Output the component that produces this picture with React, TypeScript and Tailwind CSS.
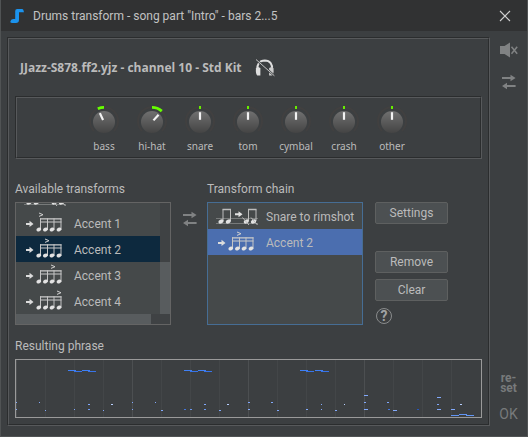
import React from "react";

const ETCH_OUTER = "border border-t-[#2b2d2e] border-l-[#2b2d2e] border-r-[#57595b] border-b-[#57595b]";
const ETCH_INNER = "border border-t-[#57595b] border-l-[#57595b] border-r-[#2b2d2e] border-b-[#2b2d2e]";

function Etched({ className, children }: { className: string; children: React.ReactNode }) {
  return (
    <div className={`${ETCH_OUTER} flex flex-col`}>
      <div className={`${ETCH_INNER} ${className} grow`}>{children}</div>
    </div>
  );
}

function NoteIcon() {
  return (
    <svg width="16" height="18" viewBox="0 0 16 18" aria-hidden="true">
      <path d="M6.2 4 Q6.2 2 8.2 2 H13.4 Q14.4 2 15 5.2 H10 V12.8 Q10 16 6.8 16 H3 Q0.8 16 1.4 14.2 Q2.2 12 4.4 12 H6.2 Z" fill="#1b93ee" />
    </svg>
  );
}

function SwapIcon() {
  return (
    <svg width="14" height="16" viewBox="0 0 14 16" aria-hidden="true" fill="#808283">
      <path d="M0 3 H8.5 V0.8 L13.6 4 L8.5 7.2 V5 H0 Z" />
      <path d="M13.6 11 H5 V8.8 L0 12 L5 15.2 V13 H13.6 Z" />
    </svg>
  );
}

function MuteIcon() {
  return (
    <svg width="18" height="16" viewBox="0 0 18 16" aria-hidden="true">
      <path d="M0 4 H4.5 L10 0.5 V15.5 L4.5 12 H0 Z" fill="#808283" />
      <path d="M11.5 4.8 L17.2 11.8 M17.2 4.8 L11.5 11.8" stroke="#808283" strokeWidth="1.5" />
    </svg>
  );
}

function HeadphonesOffIcon() {
  return (
    <svg width="22" height="20" viewBox="0 0 22 20" aria-hidden="true">
      <path d="M3.4 12 Q2.6 2.8 10.8 2.6 Q18.9 2.8 18.1 12" fill="none" stroke="#dedede" strokeWidth="2" />
      <path d="M2 10.5 L3.4 8.8 L6.4 10 V17.4 H3.2 Q1.4 15.5 2 10.5 Z" fill="#dedede" />
      <path d="M19.5 10.5 L18.1 8.8 L15.1 10 V17.4 H18.3 Q20.1 15.5 19.5 10.5 Z" fill="#cccccc" />
      <path d="M2 1.5 L20.4 17.8" stroke="#3c3f41" strokeWidth="2" />
      <path d="M2 1.5 L20.4 17.8" stroke="#c4c4c4" strokeWidth="1" />
    </svg>
  );
}

function Knob({ label, angle }: { label: string; angle: number }) {
  const rad = (angle * Math.PI) / 180;
  const point = (radius: number) => `${16 + radius * Math.sin(rad)} ${16 - radius * Math.cos(rad)}`;
  return (
    <div className="flex w-12 flex-col items-center" role="slider" aria-label={label} aria-valuenow={angle}>
      <svg width="32" height="32" viewBox="0 0 32 32" aria-hidden="true">
        <defs>
          <linearGradient id={`face-${label}`} x1="0" y1="0" x2="0" y2="1">
            <stop offset="0" stopColor="#707070" />
            <stop offset="1" stopColor="#444444" />
          </linearGradient>
        </defs>
        <path d="M6 25 A14 14 0 1 1 26 25" fill="none" stroke="#414040" strokeWidth="2" />
        <circle cx="16" cy="16" r="11" fill={`url(#face-${label})`} />
        {angle === 0 ? (
          <path d="M16 0 V3" stroke="#66ee00" strokeWidth="2" />
        ) : (
          <path
            d={angle < 0 ? `M${point(14.6)} A14.6 14.6 0 0 1 16 1.4` : `M16 1.4 A14.6 14.6 0 0 1 ${point(14.6)}`}
            fill="none"
            stroke="#66ff00"
            strokeWidth="2.8"
          />
        )}
        <path d={`M${point(9.8)} L${point(2.2)}`} stroke="#f2f2f2" strokeWidth="2.2" />
      </svg>
      <span className="font-['Noto_Sans',sans-serif] text-[10px] leading-4">{label}</span>
    </div>
  );
}

function AccentIcon({ beat }: { beat: number }) {
  const x = 17 + 6 * beat;
  return (
    <svg className="shrink-0" width="42" height="26" viewBox="0 0 42 26" aria-hidden="true">
      <path d="M2 13 H5.5 V10.8 L9.5 14 L5.5 17 V14.9 H2 Z" fill="#dcdcdc" />
      <path d={`M${x - 2} 3 L${x + 2} 4.7 L${x - 2} 6.4`} fill="none" stroke="#d0d0d0" />
      <path d="M16 8.8 H37.5 M16 12 H37.5" stroke="#cccccc" strokeWidth="1.2" />
      <path d="M16.5 8.3 V20 M23.5 8.3 V20 M30 8.3 V20 M37 8.3 V20" stroke="#c4c4c4" />
      {[14.8, 21.4, 28, 35].map((cx) => (
        <ellipse key={cx} cx={cx} cy="19.5" rx="2.5" ry="1.8" fill="#e2e2e2" transform={`rotate(-25 ${cx} 19.5)`} />
      ))}
    </svg>
  );
}

function RimshotIcon() {
  return (
    <svg className="shrink-0" width="42" height="26" viewBox="0 0 42 26" aria-hidden="true">
      <path d="M0 15.5 H42 M0 20.5 H42" stroke="#777a7a" />
      <path d="M7 18 V6.5 H14.5 V18 M32.5 18 V6.5 H40 V18" fill="none" stroke="#bdbdbd" />
      <path d="M6.5 6.5 H15 M32 6.5 H40.5" stroke="#bdbdbd" strokeWidth="1.6" />
      {[5, 12.3, 30.3, 37.5].map((cx) => (
        <ellipse key={cx} cx={cx} cy="18.5" rx="2.7" ry="2" fill="#e2e2e2" transform={`rotate(-25 ${cx} 18.5)`} />
      ))}
      <path d="M26.5 14.5 L33 22 M35 14.5 L41.5 22" stroke="#bdbdbd" />
      <path d="M19 10.3 H22.5 V8.2 L26.5 11.2 L22.5 14.2 V12.2 H19 Z" fill="#e2e2e2" />
    </svg>
  );
}

function ListRow({ icon, label, className }: { icon: React.ReactNode; label: string; className: string }) {
  return (
    <li role="option" aria-selected={label === "Accent 2"} className={`flex h-[26px] shrink-0 items-center gap-2 pl-2 whitespace-nowrap ${className}`}>
      {icon}
      <span className="pt-px">{label}</span>
    </li>
  );
}

function DialogButton({ children }: { children: string }) {
  return (
    <button className="h-[22px] rounded-[2px] border border-[#5e6060] bg-[#4c5052] leading-5">{children}</button>
  );
}

// Each note: x, y, length, colour, in pixels of the phrase view.
const NOTES: [number, number, number, string][] = [
  [52, 11, 8, "#3f80f5"], [58, 12, 8, "#3874e8"], [66, 11, 8, "#3f80f5"], [72, 12, 8, "#3874e8"],
  [168, 11, 8, "#3f80f5"], [174, 12, 8, "#3874e8"], [182, 11, 8, "#3f80f5"], [188, 12, 8, "#3874e8"],
  [284, 11, 8, "#3f80f5"], [290, 12, 8, "#3874e8"], [299, 11, 8, "#3f80f5"], [305, 12, 8, "#3874e8"],
  [0, 43, 1, "#82a9fa"], [0, 50, 1, "#82a9fa"], [23, 43, 1, "#82a9fa"], [29, 51, 1, "#82a9fa"],
  [58, 50, 1, "#82a9fa"], [72, 45, 2, "#82a9fa"], [72, 50, 2, "#6b98f0"], [87, 51, 1, "#82a9fa"],
  [95, 45, 2, "#b8d0ff"], [116, 43, 1, "#82a9fa"], [116, 50, 1, "#82a9fa"], [139, 43, 1, "#82a9fa"],
  [145, 51, 2, "#82a9fa"], [168, 50, 2, "#4477dd"], [174, 50, 2, "#6b98f0"], [188, 45, 2, "#82a9fa"],
  [188, 50, 2, "#6b98f0"], [203, 51, 2, "#82a9fa"], [211, 45, 2, "#b8d0ff"], [232, 43, 2, "#82a9fa"],
  [232, 50, 2, "#82a9fa"], [255, 43, 2, "#82a9fa"], [261, 51, 2, "#82a9fa"], [290, 50, 2, "#82a9fa"],
  [305, 45, 1, "#82a9fa"], [305, 50, 1, "#82a9fa"], [319, 51, 2, "#82a9fa"], [328, 45, 1, "#b8d0ff"],
  [348, 36, 4, "#82a9fa"], [348, 43, 2, "#82a9fa"], [348, 50, 4, "#82a9fa"], [371, 43, 2, "#82a9fa"],
  [372, 50, 2, "#4477dd"], [377, 51, 4, "#82a9fa"], [401, 50, 2, "#2857bd"], [421, 38, 4, "#82a9fa"],
  [421, 45, 2, "#82a9fa"], [421, 50, 4, "#82a9fa"], [435, 50, 4, "#82a9fa"], [444, 45, 2, "#b8d0ff"],
  [435, 56, 8, "#6195f5"], [443, 55, 8, "#6195f5"], [450, 56, 8, "#6195f5"],
];

function PhraseView() {
  return (
    <svg className="block h-[57px] w-full" viewBox="0 0 465 57" preserveAspectRatio="none" shapeRendering="crispEdges" role="img" aria-label="Resulting phrase">
      {Array.from({ length: 16 }, (_, i) => (
        <rect key={i} x={i * 29} y="0" width="1" height="57" fill={i % 4 === 0 ? "#4c4f51" : "#434648"} />
      ))}
      {NOTES.map(([x, y, w, fill], i) => (
        <rect key={i} x={x} y={y - 1} width={w} height="1" fill={fill} />
      ))}
    </svg>
  );
}

export default function App() {
  return (
    <div className="border-x border-b border-[#505354] bg-[#3c3f41] font-['Roboto','Open_Sans',sans-serif] text-[12px] leading-4 text-[#bbbbbb]">
      <header className="flex h-[31px] items-center bg-[#313233] pr-4 pl-2">
        <NoteIcon />
        <h1 className="ml-2 grow text-[#c2c2c2]">Drums transform - song part "Intro" - bars 2...5</h1>
        <button aria-label="Close">
          <svg width="12" height="12" viewBox="0 0 12 12" aria-hidden="true">
            <path d="M1 1 L11 11 M11 1 L1 11" stroke="#d0d0d0" strokeWidth="1.1" />
          </svg>
        </button>
      </header>

      <div className="flex pt-[6px] pb-[10px] pl-[6px]">
        <main className="min-w-0 grow">
          <Etched className="px-[6px] pb-[6px]">
            <div className="flex h-[57px] items-center gap-3 pl-[5px]">
              <h2 className="font-['Open_Sans',sans-serif] font-bold">JJazz-S878.ff2.yjz - channel 10 - Std Kit</h2>
              <button aria-label="Solo off">
                <HeadphonesOffIcon />
              </button>
            </div>

            <Etched className="flex h-[61px] justify-center pt-2 pr-px">
              <Knob label="bass" angle={-25} />
              <Knob label="hi-hat" angle={42} />
              <Knob label="snare" angle={0} />
              <Knob label="tom" angle={0} />
              <Knob label="cymbal" angle={0} />
              <Knob label="crash" angle={0} />
              <Knob label="other" angle={0} />
            </Etched>

            <div className="mt-[22px] flex">
              <section className="w-[156px]">
                <h3 id="available">Available transforms</h3>
                <div className="mt-[5px] grid h-[123px] grid-cols-[1fr_10px] grid-rows-[1fr_10px] border border-[#646464] bg-[#45494a]">
                  <ul role="listbox" aria-labelledby="available" className="flex min-h-0 flex-col justify-end overflow-hidden">
                    <ListRow icon={<RimshotIcon />} label="" className="" />
                    <ListRow icon={<AccentIcon beat={0} />} label="Accent 1" className="" />
                    <ListRow icon={<AccentIcon beat={1} />} label="Accent 2" className="bg-[#0d293e]" />
                    <ListRow icon={<AccentIcon beat={2} />} label="Accent 3" className="" />
                    <ListRow icon={<AccentIcon beat={3} />} label="Accent 4" className="" />
                  </ul>
                  <div className="flex flex-col justify-end bg-[#3f4244]">
                    <div className="h-[52px] bg-[#585c5e]" />
                  </div>
                  <div className="col-span-2 bg-[#3f4244]">
                    <div className="h-full w-[135px] bg-[#585c5e]" />
                  </div>
                </div>
              </section>

              <button aria-label="Swap" className="mr-[10px] ml-3 mt-[30px] self-start">
                <SwapIcon />
              </button>

              <section className="w-[156px]">
                <h3 id="chain">Transform chain</h3>
                <ul role="listbox" aria-labelledby="chain" className="mt-[5px] h-[123px] border border-[#466d94] bg-[#45494a]">
                  <ListRow icon={<RimshotIcon />} label="Snare to rimshot" className="" />
                  <ListRow icon={<AccentIcon beat={1} />} label="Accent 2" className="bg-[#4b6eaf]" />
                </ul>
              </section>

              <div className="ml-3 flex w-[73px] flex-col pt-[21px]">
                <DialogButton>Settings</DialogButton>
                <div className="mt-[27px] flex flex-col gap-[6px]">
                  <DialogButton>Remove</DialogButton>
                  <DialogButton>Clear</DialogButton>
                </div>
                <button aria-label="Help" className="mt-[7px] ml-px flex size-4 items-center justify-center rounded-full border border-[#8a8c8d] text-[14px] font-bold text-[#a0a2a3]">
                  ?
                </button>
              </div>
            </div>

            <h3 className="mt-[13px]">Resulting phrase</h3>
            <div className="mt-[5px] border border-[#9a9a9a]">
              <PhraseView />
            </div>
          </Etched>
        </main>

        <aside className="flex w-[37px] flex-col items-center pt-[5px] text-[#777a7b]">
          <button aria-label="Mute">
            <MuteIcon />
          </button>
          <button aria-label="Swap preset" className="mt-4">
            <SwapIcon />
          </button>
          <button className="mt-auto text-[12px] leading-[10px] font-bold">
            re-
            <br />
            set
          </button>
          <button className="mt-[11px] mb-[2px] text-[14px] leading-5">OK</button>
        </aside>
      </div>
    </div>
  );
}
